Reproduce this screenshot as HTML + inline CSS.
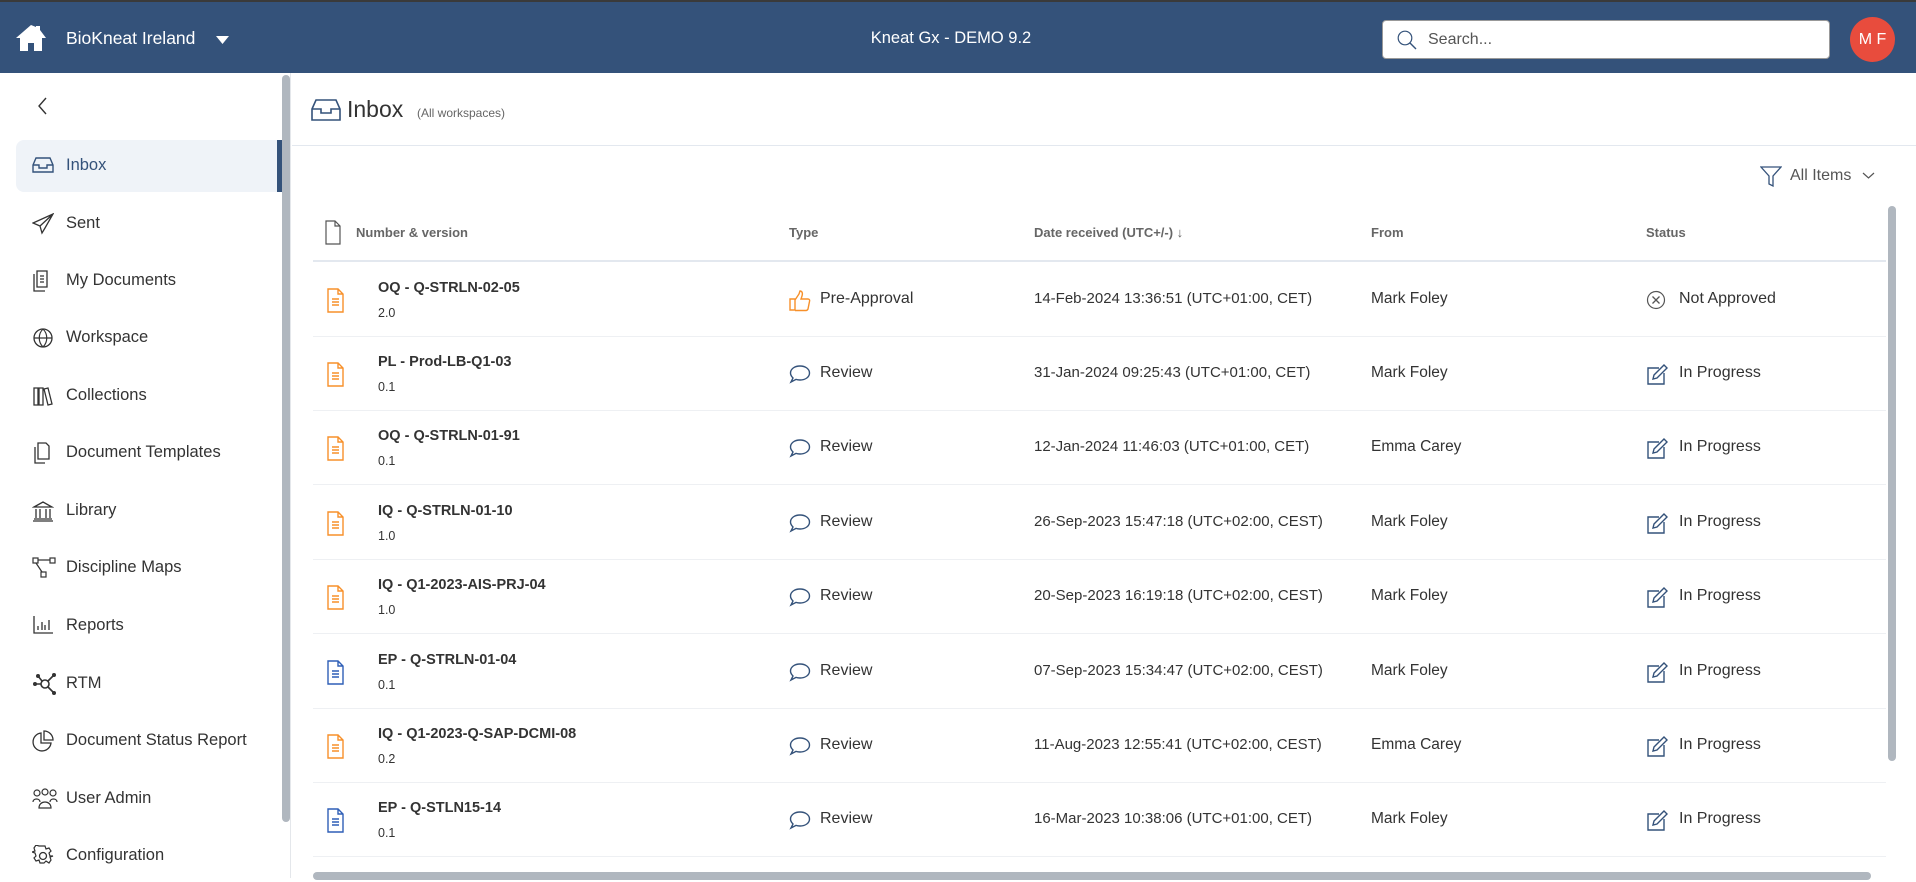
<!DOCTYPE html>
<html><head><meta charset="utf-8">
<style>
*{box-sizing:border-box;margin:0;padding:0}
body{width:1916px;height:878px;overflow:hidden;background:#fff;font-family:"Liberation Sans",sans-serif;color:#333;position:relative}
.hdr{position:absolute;left:0;top:0;width:1916px;height:73px;background:#34527a;border-top:2px solid #3a3a3a}
.hdr .brand{position:absolute;left:66px;top:26px;color:#fff;font-size:17.5px}
.hdr .title{position:absolute;left:0;width:1902px;text-align:center;top:27px;color:#fff;font-size:16.5px}
.search{position:absolute;left:1382px;top:18px;width:448px;height:39px;background:#fff;border-radius:4px;border:1px solid #999}
.search span{position:absolute;left:45px;top:10px;font-size:16px;color:#555}
.avatar{position:absolute;left:1850px;top:15px;width:45px;height:45px;border-radius:50%;background:#e84c3d;color:#fff;font-size:16px;text-align:center;line-height:45px}
.side{position:absolute;left:0;top:73px;width:291px;height:805px;border-right:1px solid #e4e7eb}
.sbar{position:absolute;left:282px;top:75px;width:8px;height:747px;background:#b0b7bf;border-radius:4px}
.item{position:absolute;left:16px;width:266px;height:52px;font-size:16.5px;color:#333}
.item svg{position:absolute;left:16px;top:15px}
.item span{position:absolute;left:50px;top:16px}
.active{background:#eff3f8;border-radius:8px 0 0 8px;border-right:5px solid #34527a;color:#34527a}
.line{position:absolute;height:1px;background:#e3e8ef}
.th{position:absolute;top:225px;font-size:13px;font-weight:bold;color:#666}
.row{position:absolute;left:313px;width:1573px;height:75px;border-bottom:1.5px solid #eef0f3}
.row .ic{position:absolute;left:14px;top:26px}
.row .t{position:absolute;left:65px;top:18px;font-size:14.5px;font-weight:bold;color:#333}
.row .v{position:absolute;left:65px;top:44px;font-size:12.5px;color:#333}
.row .ty{position:absolute;left:476px;top:28px;font-size:16px}
.row .ty svg{position:absolute;left:0;top:0}
.row .ty span{position:absolute;left:31px;top:0;white-space:nowrap}
.row .d{position:absolute;left:721px;top:28px;font-size:15px;white-space:nowrap}
.row .f{position:absolute;left:1058px;top:28px;font-size:15.5px;white-space:nowrap}
.row .s{position:absolute;left:1333px;top:28px;font-size:16px;white-space:nowrap}
.row .s svg{position:absolute;left:0;top:0}
.row .s span{position:absolute;left:33px;top:0}
</style></head><body>
<div class="hdr">
<svg style="position:absolute;left:15px;top:22px" width="32" height="28" viewBox="0 0 32 28"><path d="M16 1L1 14h4v13h8v-8h6v8h8V14h4L25 6V2h-4v1z" fill="#fff"/></svg>
<div class="brand">BioKneat Ireland</div>
<svg style="position:absolute;left:216px;top:34px" width="13" height="8"><path d="M0 0h13L6.5 8z" fill="#fff"/></svg>
<div class="title">Kneat Gx - DEMO 9.2</div>
<div class="search"><svg style="position:absolute;left:14px;top:9px" width="20" height="20" viewBox="0 0 20 20"><circle cx="8" cy="8" r="6.8" fill="none" stroke="#34527a" stroke-width="1.2"/><path d="M13 13L19 19" stroke="#34527a" stroke-width="1.4"/></svg><span>Search...</span></div>
<div class="avatar">M F</div>
</div>
<div class="side">
<svg style="position:absolute;left:38px;top:24px" width="10" height="18"><path d="M8 1L1 9l7 8" fill="none" stroke="#333" stroke-width="1.4"/></svg>
</div>
<div class="sbar"></div>
<div class="item active" style="top:140px"><svg width="22" height="20" viewBox="0 0 22 20"><path d="M1 10L4 3h14l3 7v7H1zM1 10h6v3h8v-3h6" fill="none" stroke="#34527a" stroke-width="1.4"/></svg><span>Inbox</span></div>
<div class="item" style="top:198px"><svg width="22" height="22" viewBox="0 0 22 22"><path d="M21 1L1 10l7 3 2 7 3-5 8-14zM8 13L21 1" fill="none" stroke="#333" stroke-width="1.3"/></svg><span>Sent</span></div>
<div class="item" style="top:255px"><svg width="20" height="22" viewBox="0 0 20 22"><path d="M5 1h10v16H5zM2 4v17h11M8 6h4M8 9h4M8 12h4" fill="none" stroke="#333" stroke-width="1.3"/></svg><span>My Documents</span></div>
<div class="item" style="top:312px"><svg width="22" height="22" viewBox="0 0 22 22"><circle cx="11" cy="11" r="9" fill="none" stroke="#333" stroke-width="1.3"/><path d="M2 11h18M11 2c-5 5-5 13 0 18M11 2c5 5 5 13 0 18" fill="none" stroke="#333" stroke-width="1.2"/></svg><span>Workspace</span></div>
<div class="item" style="top:370px"><svg width="22" height="22" viewBox="0 0 22 22"><path d="M2 3h4v17H2zM7 3h4v17H7zM12 4l4-1 4 16-4 1z" fill="none" stroke="#333" stroke-width="1.3"/></svg><span>Collections</span></div>
<div class="item" style="top:427px"><svg width="20" height="22" viewBox="0 0 20 22"><path d="M6 1h8l3 3v13H6zM3 5v16h10" fill="none" stroke="#333" stroke-width="1.3"/></svg><span>Document Templates</span></div>
<div class="item" style="top:485px"><svg width="22" height="22" viewBox="0 0 22 22"><path d="M2 7L11 2l9 5zM4 9v9M8 9v9M14 9v9M18 9v9M2 19h18M1 21h20" fill="none" stroke="#333" stroke-width="1.3"/></svg><span>Library</span></div>
<div class="item" style="top:542px"><svg width="24" height="22" viewBox="0 0 24 22"><rect x="1" y="1" width="5" height="5" fill="none" stroke="#333" stroke-width="1.2"/><rect x="18" y="1" width="5" height="5" fill="none" stroke="#333" stroke-width="1.2"/><rect x="9" y="15" width="5" height="5" fill="none" stroke="#333" stroke-width="1.2"/><path d="M6 3h12M4 6l6 9" stroke="#333" stroke-width="1.2"/></svg><span>Discipline Maps</span></div>
<div class="item" style="top:600px"><svg width="22" height="20" viewBox="0 0 22 20"><path d="M2 1v17h19M6 15v-4M10 15V7M13 15v-5M17 15V5" fill="none" stroke="#333" stroke-width="1.3"/></svg><span>Reports</span></div>
<div class="item" style="top:658px"><svg width="26" height="22" viewBox="0 0 26 22"><circle cx="13" cy="11" r="4" fill="none" stroke="#333" stroke-width="1.6"/><path d="M3 11h6M16 8l6-6M16 14l6 6M10 8L6 3" stroke="#333" stroke-width="1.6"/><circle cx="3" cy="11" r="2" fill="#333"/><circle cx="22" cy="2" r="2" fill="#333"/><circle cx="22" cy="20" r="2" fill="#333"/><circle cx="6" cy="3" r="2" fill="#333"/></svg><span>RTM</span></div>
<div class="item" style="top:715px"><svg width="22" height="22" viewBox="0 0 22 22"><path d="M9 3a9 9 0 1 0 10 10H9z" fill="none" stroke="#333" stroke-width="1.3"/><path d="M12 1v9h9a9 9 0 0 0-9-9z" fill="none" stroke="#333" stroke-width="1.3"/></svg><span>Document Status Report</span></div>
<div class="item" style="top:773px"><svg width="26" height="22" viewBox="0 0 26 22"><circle cx="5" cy="5" r="3" fill="none" stroke="#333" stroke-width="1.2"/><circle cx="13" cy="4" r="3" fill="none" stroke="#333" stroke-width="1.2"/><circle cx="21" cy="5" r="3" fill="none" stroke="#333" stroke-width="1.2"/><path d="M1 14c0-4 7-4 7 0M18 14c0-4 7-4 7 0M7 20c0-8 12-8 12 0z" fill="none" stroke="#333" stroke-width="1.2"/></svg><span>User Admin</span></div>
<div class="item" style="top:830px"><svg width="22" height="22" viewBox="0 0 22 22"><circle cx="11" cy="11" r="3.5" fill="none" stroke="#333" stroke-width="1.3"/><path d="M9 1h4l1 3 3-1 2 3-2 2 1 3h3v0l-3 1 1 3-2 3-3-2-2 2h-4l-1-3-3 1-2-3 2-2-1-3-3-1 0 0 3-1-1-3 2-3 3 1z" fill="none" stroke="#333" stroke-width="1.2"/></svg><span>Configuration</span></div>

<svg style="position:absolute;left:311px;top:99px" width="30" height="22" viewBox="0 0 30 22"><path d="M1 10L5 1h20l4 9v11H1zM1 10h9v4h10v-4h9" fill="none" stroke="#34527a" stroke-width="1.6"/></svg>
<div style="position:absolute;left:347px;top:96px;font-size:23px;color:#333">Inbox</div>
<div style="position:absolute;left:417px;top:106px;font-size:12px;color:#666">(All workspaces)</div>
<div class="line" style="left:292px;top:145px;width:1624px"></div>

<svg style="position:absolute;left:1760px;top:165px" width="22" height="22" viewBox="0 0 22 22"><path d="M1 2h20l-8 9v10l-4-2v-8z" fill="none" stroke="#34527a" stroke-width="1.3"/></svg>
<div style="position:absolute;left:1790px;top:167px;font-size:16px;color:#555">All Items</div>
<svg style="position:absolute;left:1862px;top:172px" width="13" height="8"><path d="M1 1l5.5 5L12 1" fill="none" stroke="#555" stroke-width="1.2"/></svg>

<svg style="position:absolute;left:325px;top:220px" width="16" height="25" viewBox="0 0 16 25"><path d="M1 1h9l5 5v18H1z M10 1v5h5" fill="none" stroke="#555" stroke-width="1.2"/></svg>
<div class="th" style="left:356px">Number &amp; version</div>
<div class="th" style="left:789px">Type</div>
<div class="th" style="left:1034px">Date received (UTC+/-) &#8595;</div>
<div class="th" style="left:1371px">From</div>
<div class="th" style="left:1646px">Status</div>
<div class="line" style="left:313px;top:260px;width:1573px;height:2px"></div>

<svg width="0" height="0" style="position:absolute"><defs>
<g id="doco"><path d="M1 1h10l5 5v18H1z M11 1v5h5 M5 11h7M5 14h7M5 17h7" fill="none" stroke="#f7902a" stroke-width="1.4"/></g>
<g id="docb"><path d="M1 1h10l5 5v18H1z M11 1v5h5 M5 11h7M5 14h7M5 17h7" fill="none" stroke="#2f5fb7" stroke-width="1.4"/></g>
<g id="rev"><path d="M11 2c5.5 0 9.5 3 9.5 7s-4 7-9.5 7c-1.5 0-3-.2-4-.6L2 18l2-4C2.5 12.5 1.5 11 1.5 9c0-4 4-7 9.5-7z" fill="none" stroke="#34527a" stroke-width="1.4"/></g>
<g id="edit"><path d="M13 4H2v16h16V9" fill="none" stroke="#34527a" stroke-width="1.4"/><path d="M18 1l3 3-10 10-4 1 1-4z" fill="none" stroke="#34527a" stroke-width="1.4"/></g>
</defs></svg>

<div class="row" style="top:262px"><svg class="ic" width="18" height="26"><use href="#doco"/></svg><div class="t">OQ - Q-STRLN-02-05</div><div class="v">2.0</div>
<div class="ty"><svg width="22" height="22" viewBox="0 0 22 22"><path d="M1 9h5v11H1zM6 10l4-6 1-3c2 0 3 2 2 5l-1 3h7c1.5 0 2 1.5 1.5 2.5L19 19c-.5 1-1 1.5-2 1.5H6" fill="none" stroke="#f7902a" stroke-width="1.4"/></svg><span>Pre-Approval</span></div>
<div class="d">14-Feb-2024 13:36:51 (UTC+01:00, CET)</div><div class="f">Mark Foley</div>
<div class="s"><svg width="20" height="20" viewBox="0 0 20 20"><circle cx="10" cy="10" r="8.5" fill="none" stroke="#555" stroke-width="1.2"/><path d="M6.5 6.5l7 7M13.5 6.5l-7 7" stroke="#555" stroke-width="1.3"/></svg><span>Not Approved</span></div></div>

<div class="row" style="top:336px"><svg class="ic" width="18" height="26"><use href="#doco"/></svg><div class="t">PL - Prod-LB-Q1-03</div><div class="v">0.1</div>
<div class="ty"><svg width="22" height="20"><use href="#rev"/></svg><span>Review</span></div>
<div class="d">31-Jan-2024 09:25:43 (UTC+01:00, CET)</div><div class="f">Mark Foley</div>
<div class="s"><svg width="22" height="22"><use href="#edit"/></svg><span>In Progress</span></div></div>

<div class="row" style="top:410px"><svg class="ic" width="18" height="26"><use href="#doco"/></svg><div class="t">OQ - Q-STRLN-01-91</div><div class="v">0.1</div>
<div class="ty"><svg width="22" height="20"><use href="#rev"/></svg><span>Review</span></div>
<div class="d">12-Jan-2024 11:46:03 (UTC+01:00, CET)</div><div class="f">Emma Carey</div>
<div class="s"><svg width="22" height="22"><use href="#edit"/></svg><span>In Progress</span></div></div>

<div class="row" style="top:485px"><svg class="ic" width="18" height="26"><use href="#doco"/></svg><div class="t">IQ - Q-STRLN-01-10</div><div class="v">1.0</div>
<div class="ty"><svg width="22" height="20"><use href="#rev"/></svg><span>Review</span></div>
<div class="d">26-Sep-2023 15:47:18 (UTC+02:00, CEST)</div><div class="f">Mark Foley</div>
<div class="s"><svg width="22" height="22"><use href="#edit"/></svg><span>In Progress</span></div></div>

<div class="row" style="top:559px"><svg class="ic" width="18" height="26"><use href="#doco"/></svg><div class="t">IQ - Q1-2023-AIS-PRJ-04</div><div class="v">1.0</div>
<div class="ty"><svg width="22" height="20"><use href="#rev"/></svg><span>Review</span></div>
<div class="d">20-Sep-2023 16:19:18 (UTC+02:00, CEST)</div><div class="f">Mark Foley</div>
<div class="s"><svg width="22" height="22"><use href="#edit"/></svg><span>In Progress</span></div></div>

<div class="row" style="top:634px"><svg class="ic" width="18" height="26"><use href="#docb"/></svg><div class="t">EP - Q-STRLN-01-04</div><div class="v">0.1</div>
<div class="ty"><svg width="22" height="20"><use href="#rev"/></svg><span>Review</span></div>
<div class="d">07-Sep-2023 15:34:47 (UTC+02:00, CEST)</div><div class="f">Mark Foley</div>
<div class="s"><svg width="22" height="22"><use href="#edit"/></svg><span>In Progress</span></div></div>

<div class="row" style="top:708px"><svg class="ic" width="18" height="26"><use href="#doco"/></svg><div class="t">IQ - Q1-2023-Q-SAP-DCMI-08</div><div class="v">0.2</div>
<div class="ty"><svg width="22" height="20"><use href="#rev"/></svg><span>Review</span></div>
<div class="d">11-Aug-2023 12:55:41 (UTC+02:00, CEST)</div><div class="f">Emma Carey</div>
<div class="s"><svg width="22" height="22"><use href="#edit"/></svg><span>In Progress</span></div></div>

<div class="row" style="top:782px"><svg class="ic" width="18" height="26"><use href="#docb"/></svg><div class="t">EP - Q-STLN15-14</div><div class="v">0.1</div>
<div class="ty"><svg width="22" height="20"><use href="#rev"/></svg><span>Review</span></div>
<div class="d">16-Mar-2023 10:38:06 (UTC+01:00, CET)</div><div class="f">Mark Foley</div>
<div class="s"><svg width="22" height="22"><use href="#edit"/></svg><span>In Progress</span></div></div>

<div style="position:absolute;left:1888px;top:206px;width:8px;height:555px;background:#b0b7bf;border-radius:4px"></div>
<div style="position:absolute;left:313px;top:872px;width:1558px;height:8px;background:#b0b7bf;border-radius:4px"></div>
</body></html>
